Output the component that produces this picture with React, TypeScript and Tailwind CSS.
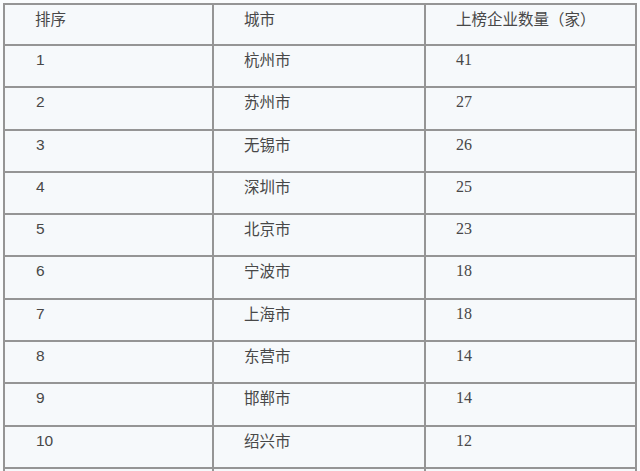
const rows: [string, string, string][] = [
  ["1", "杭州市", "41"],
  ["2", "苏州市", "27"],
  ["3", "无锡市", "26"],
  ["4", "深圳市", "25"],
  ["5", "北京市", "23"],
  ["6", "宁波市", "18"],
  ["7", "上海市", "18"],
  ["8", "东营市", "14"],
  ["9", "邯郸市", "14"],
  ["10", "绍兴市", "12"],
  ["", "", ""],
];

const cjk = "font-['Noto_Sans_CJK_SC',sans-serif]";

export default function App() {
  return (
    <div className="w-[640px] h-[471px] overflow-hidden bg-[#fafcfd] pl-[3px] pt-[3px]">
      <div className="w-[634px] border-l-2 border-t-2 border-r-2 border-[#959595] bg-[#f6f9fb] text-[15.5px] leading-[20px] text-[#484848]">
        <div className="grid grid-cols-[209px_212px_209px] h-[41px] border-b-2 border-[#959595]">
          <div className={`border-r-2 border-[#959595] pl-[30px] pt-[3px] ${cjk}`}>排序</div>
          <div className={`border-r-2 border-[#959595] pl-[30px] pt-[3px] ${cjk}`}>城市</div>
          <div className={`pl-[30px] pt-[3px] ${cjk}`}>上榜企业数量（家）</div>
        </div>
        {rows.map(([rank, city, count], i) => (
          <div
            key={i}
            className="grid grid-cols-[209px_212px_209px] h-[42.3px] border-b-2 border-[#959595]"
          >
            <div className="border-r-2 border-[#959595] pl-[31px] pt-[4px] font-['Liberation_Sans',sans-serif]">
              {rank}
            </div>
            <div className={`border-r-2 border-[#959595] pl-[30px] pt-[3px] ${cjk}`}>{city}</div>
            <div className="pl-[30px] pt-[4px] text-[16px] font-['Liberation_Serif',serif]">{count}</div>
          </div>
        ))}
      </div>
    </div>
  );
}
